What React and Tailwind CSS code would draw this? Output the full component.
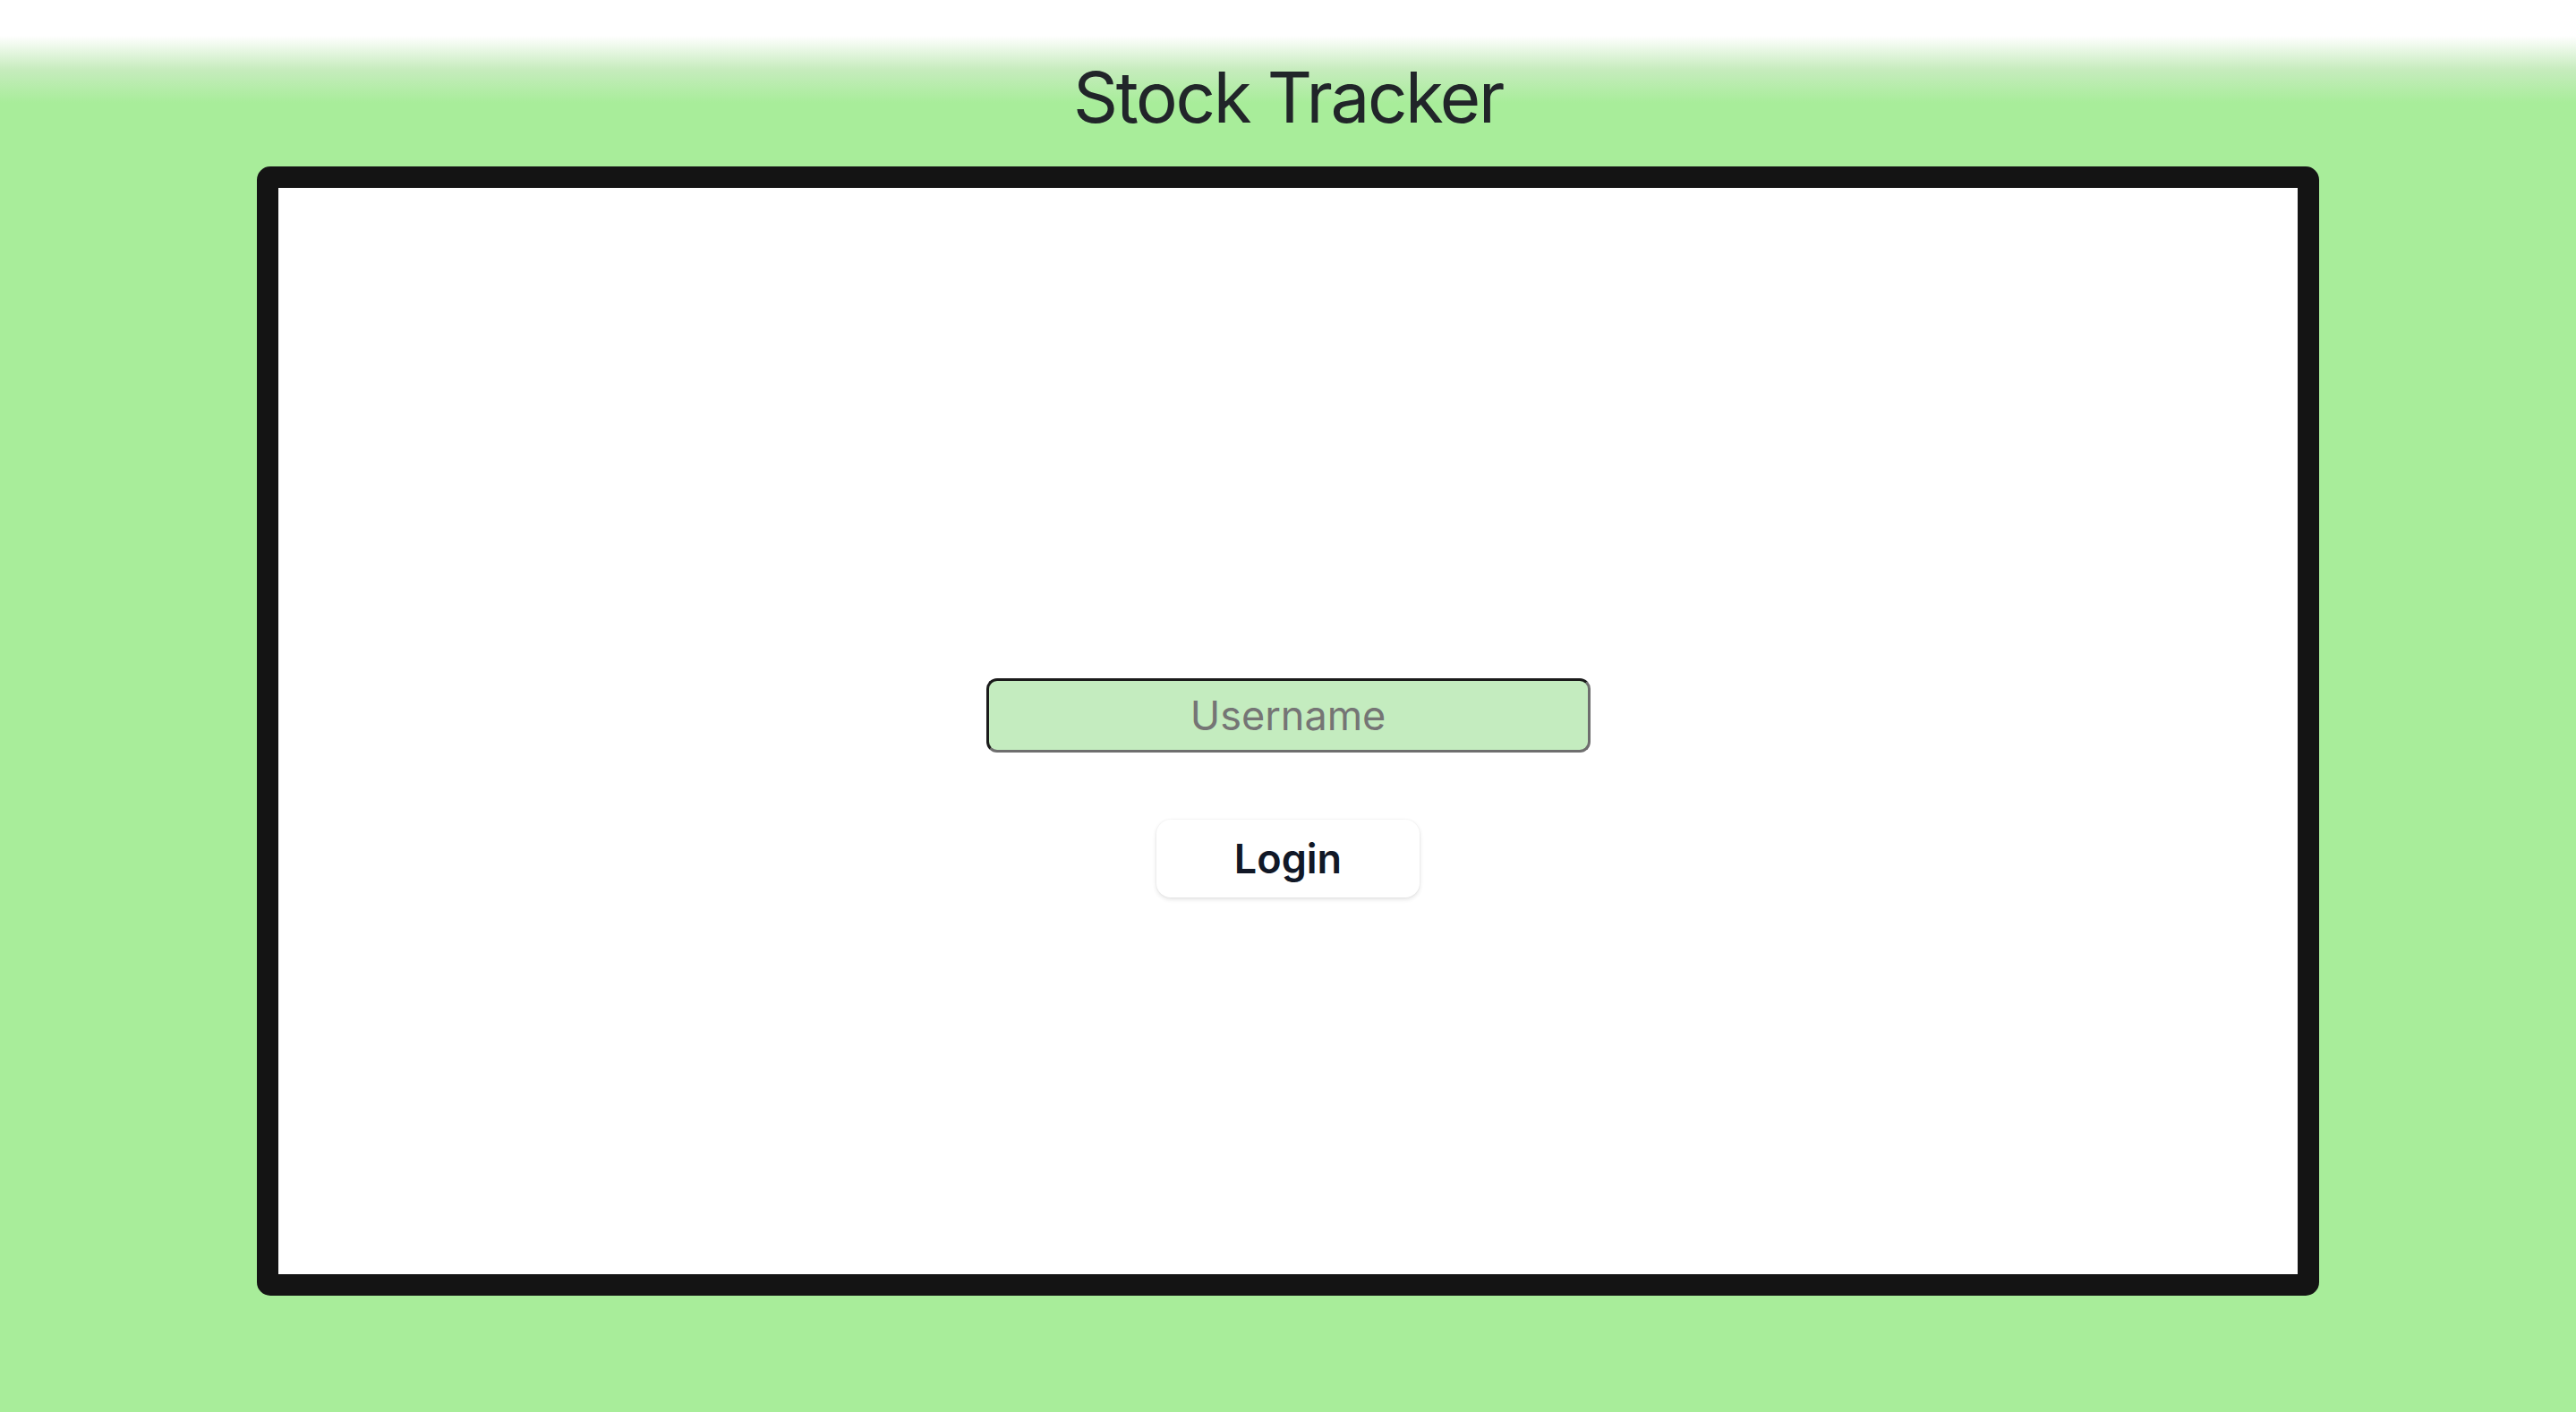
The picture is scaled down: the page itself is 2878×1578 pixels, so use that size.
import { useState } from "react";

export default function App() {
  const [username, setUsername] = useState("");

  return (
    <div
      className="min-h-screen w-full bg-[linear-gradient(to_bottom,#ffffff_40px,#c6ecbd_78px,#a8ed9a_115px)] bg-[#a8ed9a]"
      style={{ fontFamily: "Inter, 'Noto Sans', sans-serif" }}
    >
      {/* Header */}
      <h1 className="pt-[70px] mb-[38px] text-center text-[78px] leading-none tracking-[-0.03em] font-normal text-[#212529]">
        Stock Tracker
      </h1>

      {/* Login card */}
      <div className="mx-auto w-[2304px] h-[1262px] bg-white border-[24px] border-[#141414] rounded-[15px]">
        <div className="flex flex-col items-center pt-[548px]">
          <input
            className="w-[675px] h-[83px] rounded-[12px] border-[3px] border-t-[#1b1b1b] border-l-[#1b1b1b] border-b-[#6e6e6e] border-r-[#6e6e6e] bg-[#c4ecbf] text-center text-[45px] text-black placeholder:text-[#757575] outline-none"
            placeholder="Username"
            value={username}
            onChange={e => setUsername(e.target.value)}
          />

          <button
            className="mt-[75px] w-[294px] h-[87px] rounded-[16px] bg-white text-[45px] font-semibold text-[#111827] shadow-[0_2px_5px_rgba(0,0,0,0.12),0_0_0_1px_rgba(0,0,0,0.02)]"
          >
            Login
          </button>
        </div>
      </div>
    </div>
  );
}
